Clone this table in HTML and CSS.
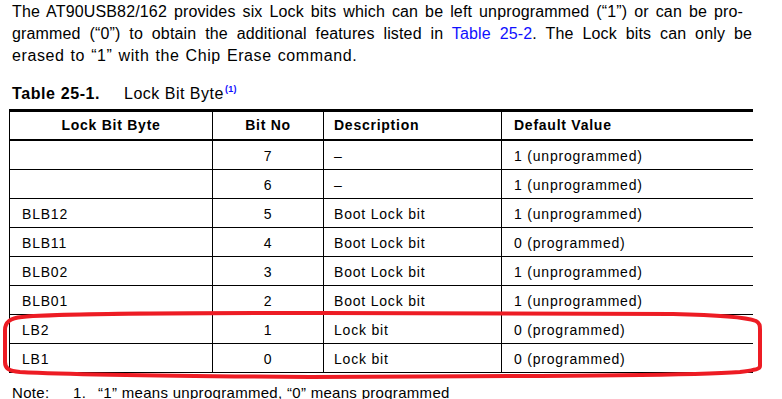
FILE: index.html
```html
<!DOCTYPE html>
<html>
<head>
<meta charset="utf-8">
<link rel="stylesheet" href="styles.css">
</head>
<body>
<div class="page">
  <div class="para">
    <div class="line l1">The AT90USB82/162 provides six Lock bits which can be left unprogrammed (“1”) or can be pro-</div>
    <div class="line l2">grammed (“0”) to obtain the additional features listed in <span class="link">Table 25-2</span>. The Lock bits can only be</div>
    <div class="line l3">erased to “1” with the Chip Erase command.</div>
  </div>
  <div class="caption"><span class="cap-num">Table 25-1.</span><span class="cap-title">Lock Bit Byte<sup class="ref">(1)</sup></span></div>
  <table class="lock">
    <colgroup>
      <col class="c1"><col class="c2"><col class="c3"><col class="c4">
    </colgroup>
    <thead>
      <tr><th class="center">Lock Bit Byte</th><th class="center">Bit No</th><th>Description</th><th>Default Value</th></tr>
    </thead>
    <tbody>
      <tr><td></td><td class="center">7</td><td>–</td><td>1 (unprogrammed)</td></tr>
      <tr><td></td><td class="center">6</td><td>–</td><td>1 (unprogrammed)</td></tr>
      <tr><td>BLB12</td><td class="center">5</td><td>Boot Lock bit</td><td>1 (unprogrammed)</td></tr>
      <tr><td>BLB11</td><td class="center">4</td><td>Boot Lock bit</td><td>0 (programmed)</td></tr>
      <tr><td>BLB02</td><td class="center">3</td><td>Boot Lock bit</td><td>1 (unprogrammed)</td></tr>
      <tr><td>BLB01</td><td class="center">2</td><td>Boot Lock bit</td><td>1 (unprogrammed)</td></tr>
      <tr><td>LB2</td><td class="center">1</td><td>Lock bit</td><td>0 (programmed)</td></tr>
      <tr><td>LB1</td><td class="center">0</td><td>Lock bit</td><td>0 (programmed)</td></tr>
    </tbody>
  </table>
  <div class="note"><span class="note-label">Note:</span><span class="note-num">1.</span><span>“1” means unprogrammed, “0” means programmed</span></div>
  <svg class="mark" width="782" height="399" viewBox="0 0 782 399">
    <path d="M22,317 C60,313 200,313 320,313 L673,314 C720,315 748,318 756,321 C760,323 760,326 760,330 L760,366 C760,369 756,370 740,372 C700,375 600,376 310,377 C150,376 60,374 20,372 C8,371 5,368 5,362 L5,330 C5,322 10,318 22,317 Z" fill="none" stroke="#ed1c24" stroke-width="4"/>
  </svg>
</div>
</body>
</html>
```
FILE: styles.css
```css
html, body {
  margin: 0;
  padding: 0;
  background: #ffffff;
}
.page {
  position: relative;
  width: 782px;
  height: 399px;
  overflow: hidden;
  font-family: "Liberation Sans", Arial, sans-serif;
  color: #000;
}
.para {
  padding: 1px 0 0 12px;
  font-size: 16px;
  line-height: 22px;
}
.line {
  white-space: nowrap;
}
.l1 {
  width: 731px;
  text-align: justify;
  text-align-last: justify;
  letter-spacing: 0.15px;
}
.l2 {
  width: 740px;
  text-align: justify;
  text-align-last: justify;
  letter-spacing: 0.15px;
}
.l3 {
  letter-spacing: 0.6px;
  word-spacing: 1px;
}
.link {
  color: #1010ff;
}
.caption {
  margin: 18px 0 0 12px;
  font-size: 16px;
  line-height: 18px;
  height: 18px;
}
.cap-num {
  font-weight: bold;
  display: inline-block;
  width: 112px;
  letter-spacing: 0.6px;
}
.cap-title {
  letter-spacing: 0.5px;
}
.ref {
  color: #1010ff;
  font-size: 9px;
  font-weight: bold;
  vertical-align: 7px;
  line-height: 0;
  margin-left: 1px;
  letter-spacing: 0.3px;
}
.lock {
  margin: 6px 0 0 9px;
  border-collapse: collapse;
  table-layout: fixed;
  width: 743px;
  font-size: 14px;
  letter-spacing: 0.8px;
}
.c1 { width: 203px; }
.c2 { width: 111px; }
.c3 { width: 178px; }
.c4 { width: 251px; }
.lock thead th {
  border-top: 3px solid #000;
  border-bottom: 2px solid #000;
  height: 27px;
  padding: 0 0 0 12px;
  line-height: 27px;
  text-align: left;
  font-weight: bold;
  letter-spacing: 0.75px;
}
.lock th, .lock td {
  border-left: 1px solid #000;
}
.lock th:first-child, .lock td:first-child {
  border-left: 1.5px solid #000;
}
.lock td {
  border-bottom: 1px solid #000;
  height: 26px;
  padding: 2px 0 0 12px;
  line-height: 26px;
  vertical-align: top;
  white-space: nowrap;
}
.lock td:nth-child(3), .lock th:nth-child(3) {
  padding-left: 10px;
}
.lock .center {
  text-align: center;
  padding-left: 0;
}
.note {
  margin: 11px 0 0 12px;
  font-size: 15px;
  line-height: 18px;
  letter-spacing: 0.3px;
}
.note-label {
  display: inline-block;
  width: 61px;
}
.note-num {
  display: inline-block;
  width: 25px;
}
.mark {
  position: absolute;
  left: 0;
  top: 0;
  pointer-events: none;
}
```
